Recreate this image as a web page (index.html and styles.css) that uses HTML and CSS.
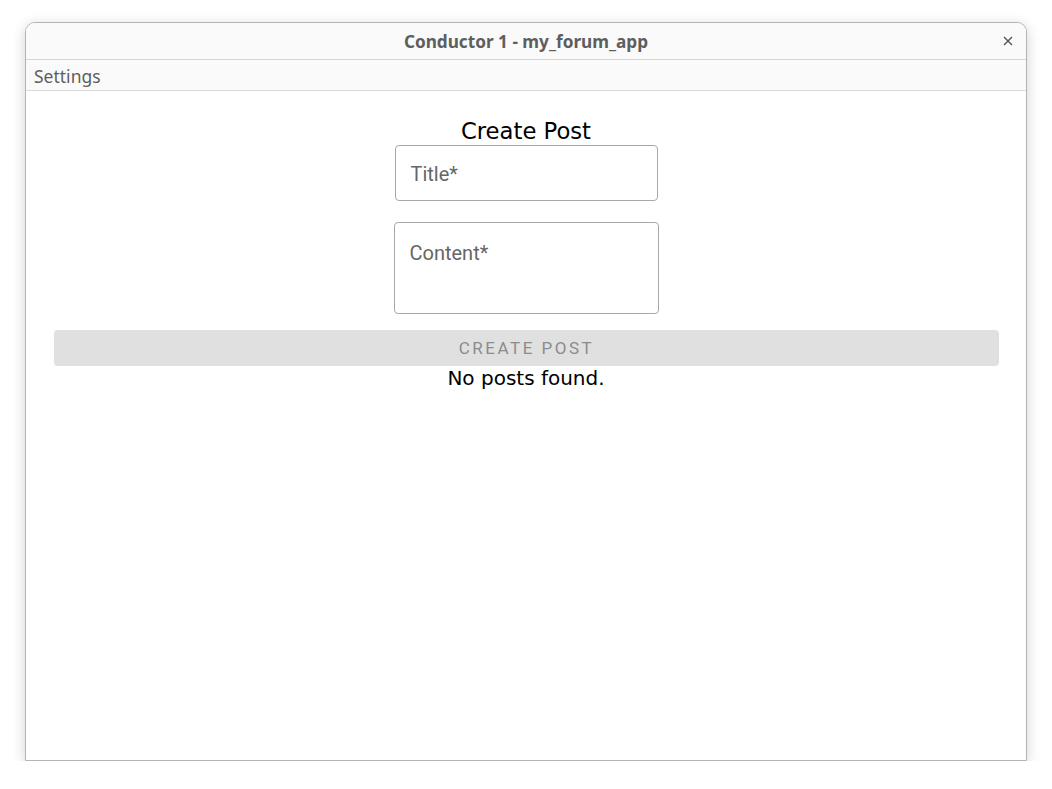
FILE: index.html
```html
<!DOCTYPE html>
<html>
<head>
<meta charset="utf-8">
<link rel="stylesheet" href="styles.css">
</head>
<body>
<div class="window">
  <div class="titlebar">
    <span class="title">Conductor 1 - my_forum_app</span>
    <span class="close" aria-label="close">
      <svg width="10" height="10" viewBox="0 0 10 10"><path d="M1 1 L9 9 M9 1 L1 9" stroke="#555" stroke-width="1.4" fill="none"/></svg>
    </span>
  </div>
  <div class="menubar"><span class="menu-item">Settings</span></div>
  <div class="content">
    <div class="heading">Create Post</div>
    <div class="field field-title"><span class="label">Title*</span></div>
    <div class="field field-content"><span class="label">Content*</span></div>
    <div class="button">CREATE POST</div>
    <div class="empty">No posts found.</div>
  </div>
</div>
</body>
</html>
```
FILE: styles.css
```css
html, body {
  margin: 0;
  padding: 0;
  background: #ffffff;
}
body {
  padding: 22px 0 0 25px;
}
.window {
  width: 1002px;
  height: 739px;
  box-sizing: border-box;
  border: 1px solid #b4b4b4;
  border-radius: 10px 10px 0 0;
  background: #ffffff;
  box-shadow: 0 3px 14px rgba(0,0,0,0.18);
  display: flex;
  flex-direction: column;
  overflow: hidden;
}
.titlebar {
  height: 36px;
  background: #fafafa;
  border-bottom: 1px solid #d6d6d6;
  display: flex;
  align-items: center;
  justify-content: center;
  position: relative;
}
.title {
  font-family: "Noto Sans", sans-serif;
  font-weight: 700;
  font-size: 17.2px;
  color: #5e5e5e;
}
.close {
  position: absolute;
  right: 13px;
  top: 13px;
  width: 10px;
  height: 10px;
  display: flex;
}
.menubar {
  height: 30px;
  background: #fafafa;
  border-bottom: 1px solid #dadada;
  display: flex;
  align-items: center;
  padding-left: 8px;
  padding-top: 2px;
  box-sizing: border-box;
  height: 31px;
}
.menu-item {
  font-family: "Noto Sans", sans-serif;
  font-size: 17.5px;
  color: #5e5e5e;
}
.content {
  flex: 1;
  display: flex;
  flex-direction: column;
  align-items: center;
  padding-top: 27px;
}
.heading {
  font-family: "DejaVu Sans", sans-serif;
  font-size: 22.7px;
  color: #000;
  line-height: 27px;
}
.field {
  box-sizing: border-box;
  border: 1px solid #a8a8a8;
  border-radius: 4px;
  display: flex;
  padding-left: 15px;
}
.label {
  font-family: Roboto, sans-serif;
  font-size: 20px;
  color: #666666;
}
.field-title {
  width: 263px;
  height: 56px;
  align-items: center;
  padding-top: 1px;
}
.field-content {
  width: 265px;
  height: 92px;
  margin-top: 21px;
  padding-top: 18px;
  align-items: flex-start;
}
.button {
  align-self: stretch;
  margin: 16px 27px 0 28px;
  height: 36px;
  border-radius: 4px;
  background: #e0e0e0;
  color: #8c8c8c;
  font-family: Roboto, sans-serif;
  font-size: 17px;
  letter-spacing: 2.5px;
  display: flex;
  align-items: center;
  justify-content: center;
}
.empty {
  font-family: "DejaVu Sans", sans-serif;
  font-size: 20px;
  color: #000;
  line-height: 24px;
}
```
